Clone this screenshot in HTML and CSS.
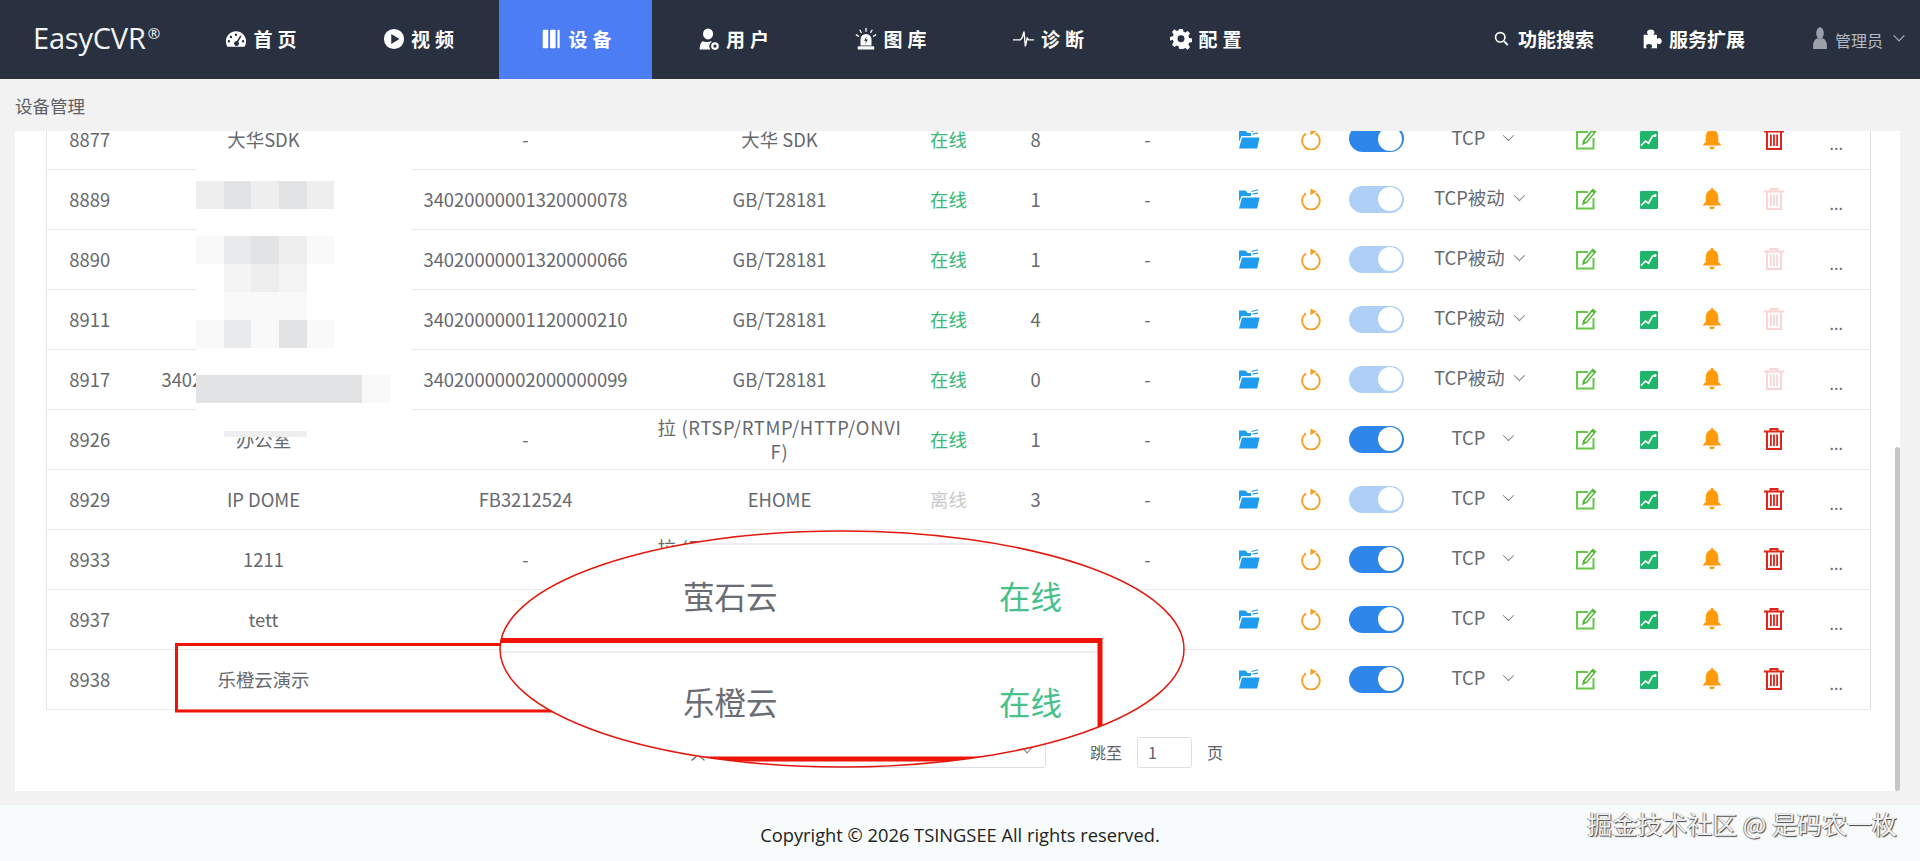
FILE: index.html
```html
<!DOCTYPE html>
<html lang="zh-CN">
<head>
<meta charset="utf-8">
<title>EasyCVR 设备管理</title>
<link rel="stylesheet" href="styles.css">
</head>
<body>
<svg class="defs" aria-hidden="true">
  <symbol id="i-gauge" viewBox="0 0 24 24"><path fill-rule="evenodd" d="M12 3.500C5.900 3.500 1 8.400 1 14.500c0 2.200.6 4.200 1.700 6h18.600c1.100-1.800 1.700-3.800 1.700-6 0-6.100-4.900-11-11-11zM12 6a1.300 1.300 0 1 1 0 2.600A1.300 1.300 0 0 1 12 6zM6.500 8.500a1.300 1.300 0 1 1 0 2.600 1.300 1.300 0 0 1 0-2.600zM4.300 13.200a1.300 1.300 0 1 1 0 2.600 1.300 1.300 0 0 1 0-2.600zM19.700 13.200a1.300 1.300 0 1 1 0 2.600 1.300 1.300 0 0 1 0-2.600zM16.600 8.200l1.400.8-3.500 6a2.700 2.700 0 1 1-1.500-.8z"/></symbol>
  <symbol id="i-play" viewBox="0 0 24 24"><path fill-rule="evenodd" d="M12 1a11 11 0 1 0 0 22 11 11 0 0 0 0-22zM9 6.500l9 5.500-9 5.500z"/></symbol>
  <symbol id="i-device" viewBox="0 0 24 24"><rect x="3" y="2" width="6" height="20" rx="1"/><rect x="11" y="2" width="6" height="20" rx="1"/><rect x="19" y="2" width="2.500" height="20" rx="1"/></symbol>
  <symbol id="i-user" viewBox="0 0 24 24"><ellipse cx="11" cy="6.500" rx="5.500" ry="6"/><path fill-rule="evenodd" d="M5 14.500c-2 1.500-3.200 4.500-3.200 9h12c-1-1-1.500-2.300-1.500-3.700 0-2 1-3.700 2.700-4.600-.3-.3-.5-.5-.9-.7-2 1.200-6.600 1.200-9.100 0z"/><path fill-rule="evenodd" d="M18.500 15.500a4.200 4.200 0 1 0 0 8.400 4.200 4.200 0 0 0 0-8.400zm0 2.400a1.800 1.800 0 1 1 0 3.600 1.800 1.800 0 0 1 0-3.600z"/></symbol>
  <symbol id="i-alarm" viewBox="0 0 24 24"><path fill-rule="evenodd" d="M12 6.500a6 6 0 0 0-6 6V19h12v-6.500a6 6 0 0 0-6-6zM13 9l-3.200 5H12l-1 3.500 3.200-5H12z"/><rect x="3" y="20" width="18" height="3.500" rx="1"/><path d="M11.300 0h1.400v4h-1.400zM4.500 2.300l1.200-.7 2 3.400-1.200.7zM19.500 2.300l-1.200-.7-2 3.400 1.200.7zM.6 7.800l.7-1.200 3.400 2-.7 1.200zM23.400 7.800l-.7-1.200-3.400 2 .7 1.200z"/></symbol>
  <symbol id="i-pulse" viewBox="0 0 24 24"><path fill="none" stroke="currentColor" stroke-width="1.500" d="M0 13h8l2-2.500 2-6.500 1.500 16 2-9 1.500 2h6"/></symbol>
  <symbol id="i-cog" viewBox="0 0 24 24"><path fill-rule="evenodd" d="M10 1h4l.7 3.200 1.900.8 2.800-1.800 2.400 2.900-1.800 2.700.8 2 3.200.7v3.800l-3.200.7-.8 2 1.800 2.700-2.400 2.900-2.800-1.800-1.900.8L14 23h-4l-.7-3.200-1.900-.8-2.800 1.800-2.400-2.900 1.800-2.700-.8-2L0 13.500V9.700l3.200-.7.8-2L2.200 4.300l2.400-2.900L7.400 3.200l1.900-.8zM12 8a3.800 3.800 0 1 0 0 7.600A3.800 3.800 0 0 0 12 8z"/></symbol>
  <symbol id="i-search" viewBox="0 0 24 24"><circle cx="10" cy="10" r="7.500" fill="none" stroke="currentColor" stroke-width="2.600"/><path d="M15 17l2-2 6 6.500-2 2z"/></symbol>
  <symbol id="i-puzzle" viewBox="0 0 24 24"><path d="M2 7h5.500C6.500 6 6 5 6 4c0-2 2-3.500 4.500-3.500S15 2 15 4c0 1-.5 2-1.500 3H18v5c1-.8 1.800-1.200 2.700-1.200 1.800 0 3 1.700 3 3.700s-1.200 3.700-3 3.700c-.9 0-1.700-.4-2.700-1.200V23h-7c.8-1 1.200-1.700 1.200-2.500 0-1.500-1.700-2.500-3.700-2.500s-3.700 1-3.700 2.500c0 .8.4 1.500 1.200 2.500H2z"/></symbol>
  <symbol id="i-avatar" viewBox="0 0 20 32"><ellipse cx="10" cy="9" rx="5.500" ry="8.500" fill="#9aa1ad"/><path fill="#9aa1ad" d="M0 32v-6c0-5 3.500-8.500 6.500-9.500 2 1 5 1 7 0 3 1 6.500 4.500 6.500 9.500v6z"/></symbol>
  <symbol id="i-folder" viewBox="0 0 22 20"><path fill="#1f9bf0" d="M4 8.500h17.500l-2.300 11H1z"/><path fill="#1f9bf0" d="M1 1.500h6.500L9.500 4H13v3H3.500L1 13z"/><path fill="none" stroke="#1f9bf0" stroke-width="1.200" d="M13.500 2.500C16 1.500 18.500 1.500 20 .8M14.500 5c2-.6 4-.6 5.500-.8"/></symbol>
  <symbol id="i-refresh" viewBox="0 0 20 20"><path fill="none" stroke="#f5a125" stroke-width="1.700" d="M5.500 5a8 8 0 1 0 8.700-.1"/><path fill="#f5a125" d="M9.500 .5l5.500 2.700-5.500 3.500z"/></symbol>
  <symbol id="i-edit" viewBox="0 0 22 22"><path fill="none" stroke="#67c84a" stroke-width="2" d="M13 4H2v16.500h16.500V10"/><path fill="#56b83a" d="M17.500 .5l4 3-9.500 11.500-5 2.200 1.100-5z"/><path fill="#fff" d="M17 4l1.400 1.100-7 8.400-1.600.7.400-1.700z"/></symbol>
  <symbol id="i-chart" viewBox="0 0 18 18"><rect width="18" height="18" rx="1.200" fill="#1fb56b"/><path fill="none" stroke="#fff" stroke-width="1.700" d="M1 14.500l4.500-4.500 3 2.200 4-7.200 3 0"/><circle cx="15" cy="4.500" r="1.500" fill="#fff"/></symbol>
  <symbol id="i-bell" viewBox="1 0 18 20"><path fill="#ff9a0a" d="M10 0a1.200 1.200 0 0 1 1.200 1.500C14 2.300 15.700 5 15.700 8v4.500L18.500 16h-17l2.800-3.500V8c0-3 1.700-5.700 4.500-6.500A1.200 1.200 0 0 1 10 0zM7.500 17h5c-.3 1.500-1.300 2.500-2.500 2.500S7.800 18.500 7.500 17z"/></symbol>
  <symbol id="i-trash" viewBox="0 0 20 22"><path fill="none" stroke="currentColor" stroke-width="2" d="M0 3.500h20M3 3.500V21h14V3.500M6.500 3.500V1h7v2.500"/><path fill="currentColor" d="M6 6.500h1.800V18H6zM9.100 6.500h1.800V18H9.100zM12.200 6.500H14V18h-1.800z"/></symbol>
</svg>

<header class="nav">
  <div class="logo">EasyCVR<sup>®</sup></div>
  <nav class="menu">
    <a class="item"><svg class="nic"><use href="#i-gauge"/></svg>首页</a>
    <a class="item"><svg class="nic"><use href="#i-play"/></svg>视频</a>
    <a class="item active"><svg class="nic"><use href="#i-device"/></svg>设备</a>
    <a class="item"><svg class="nic"><use href="#i-user"/></svg>用户</a>
    <a class="item"><svg class="nic"><use href="#i-alarm"/></svg>图库</a>
    <a class="item"><svg class="nic"><use href="#i-pulse"/></svg>诊断</a>
    <a class="item"><svg class="nic"><use href="#i-cog"/></svg>配置</a>
  </nav>
  <div class="tools">
    <a class="tool"><svg class="tic small"><use href="#i-search"/></svg>功能搜索</a>
    <a class="tool"><svg class="tic"><use href="#i-puzzle"/></svg>服务扩展</a>
    <a class="account"><svg class="avatar"><use href="#i-avatar"/></svg>管理员<span class="caret light"></span></a>
  </div>
</header>

<div class="crumb">设备管理</div>

<main class="card">
  <div class="scroller">
    <table class="grid">
      <colgroup>
        <col class="c1"><col class="c2"><col class="c3"><col class="c4"><col class="c5"><col class="c6"><col class="c7"><col class="c8"><col class="c9"><col class="c10"><col class="c11"><col class="c12"><col class="c13"><col class="c14"><col class="c15"><col class="c16">
      </colgroup>
      <tbody>
        <tr><td>8877</td><td>大华SDK</td><td>-</td><td>大华 SDK</td><td class="on">在线</td><td>8</td><td>-</td>
          <td><svg class="ic"><use href="#i-folder"/></svg></td><td><svg class="ic"><use href="#i-refresh"/></svg></td><td><span class="sw"></span></td><td><span class="mode tcp">TCP<span class="caret"></span></span></td><td><svg class="ic"><use href="#i-edit"/></svg></td><td><svg class="ic chart"><use href="#i-chart"/></svg></td><td><svg class="ic"><use href="#i-bell"/></svg></td><td><svg class="ic trash"><use href="#i-trash"/></svg></td><td class="more">...</td></tr>
        <tr><td>8889</td><td></td><td>34020000001320000078</td><td>GB/T28181</td><td class="on">在线</td><td>1</td><td>-</td>
          <td><svg class="ic"><use href="#i-folder"/></svg></td><td><svg class="ic"><use href="#i-refresh"/></svg></td><td><span class="sw off"></span></td><td><span class="mode">TCP被动<span class="caret"></span></span></td><td><svg class="ic"><use href="#i-edit"/></svg></td><td><svg class="ic chart"><use href="#i-chart"/></svg></td><td><svg class="ic"><use href="#i-bell"/></svg></td><td><svg class="ic trash off"><use href="#i-trash"/></svg></td><td class="more">...</td></tr>
        <tr><td>8890</td><td></td><td>34020000001320000066</td><td>GB/T28181</td><td class="on">在线</td><td>1</td><td>-</td>
          <td><svg class="ic"><use href="#i-folder"/></svg></td><td><svg class="ic"><use href="#i-refresh"/></svg></td><td><span class="sw off"></span></td><td><span class="mode">TCP被动<span class="caret"></span></span></td><td><svg class="ic"><use href="#i-edit"/></svg></td><td><svg class="ic chart"><use href="#i-chart"/></svg></td><td><svg class="ic"><use href="#i-bell"/></svg></td><td><svg class="ic trash off"><use href="#i-trash"/></svg></td><td class="more">...</td></tr>
        <tr><td>8911</td><td></td><td>34020000001120000210</td><td>GB/T28181</td><td class="on">在线</td><td>4</td><td>-</td>
          <td><svg class="ic"><use href="#i-folder"/></svg></td><td><svg class="ic"><use href="#i-refresh"/></svg></td><td><span class="sw off"></span></td><td><span class="mode">TCP被动<span class="caret"></span></span></td><td><svg class="ic"><use href="#i-edit"/></svg></td><td><svg class="ic chart"><use href="#i-chart"/></svg></td><td><svg class="ic"><use href="#i-bell"/></svg></td><td><svg class="ic trash off"><use href="#i-trash"/></svg></td><td class="more">...</td></tr>
        <tr><td>8917</td><td>34020000002000000099</td><td>34020000002000000099</td><td>GB/T28181</td><td class="on">在线</td><td>0</td><td>-</td>
          <td><svg class="ic"><use href="#i-folder"/></svg></td><td><svg class="ic"><use href="#i-refresh"/></svg></td><td><span class="sw off"></span></td><td><span class="mode">TCP被动<span class="caret"></span></span></td><td><svg class="ic"><use href="#i-edit"/></svg></td><td><svg class="ic chart"><use href="#i-chart"/></svg></td><td><svg class="ic"><use href="#i-bell"/></svg></td><td><svg class="ic trash off"><use href="#i-trash"/></svg></td><td class="more">...</td></tr>
        <tr><td>8926</td><td>办公室</td><td>-</td><td class="wrap">拉 (RTSP/RTMP/HTTP/ONVIF)</td><td class="on">在线</td><td>1</td><td>-</td>
          <td><svg class="ic"><use href="#i-folder"/></svg></td><td><svg class="ic"><use href="#i-refresh"/></svg></td><td><span class="sw"></span></td><td><span class="mode tcp">TCP<span class="caret"></span></span></td><td><svg class="ic"><use href="#i-edit"/></svg></td><td><svg class="ic chart"><use href="#i-chart"/></svg></td><td><svg class="ic"><use href="#i-bell"/></svg></td><td><svg class="ic trash"><use href="#i-trash"/></svg></td><td class="more">...</td></tr>
        <tr><td>8929</td><td>IP DOME</td><td>FB3212524</td><td>EHOME</td><td class="offline">离线</td><td>3</td><td>-</td>
          <td><svg class="ic"><use href="#i-folder"/></svg></td><td><svg class="ic"><use href="#i-refresh"/></svg></td><td><span class="sw off"></span></td><td><span class="mode tcp">TCP<span class="caret"></span></span></td><td><svg class="ic"><use href="#i-edit"/></svg></td><td><svg class="ic chart"><use href="#i-chart"/></svg></td><td><svg class="ic"><use href="#i-bell"/></svg></td><td><svg class="ic trash"><use href="#i-trash"/></svg></td><td class="more">...</td></tr>
        <tr><td>8933</td><td>1211</td><td>-</td><td class="wrap">拉 (RTSP/RTMP/HTTP/ONVIF)</td><td class="on">在线</td><td>1</td><td>-</td>
          <td><svg class="ic"><use href="#i-folder"/></svg></td><td><svg class="ic"><use href="#i-refresh"/></svg></td><td><span class="sw"></span></td><td><span class="mode tcp">TCP<span class="caret"></span></span></td><td><svg class="ic"><use href="#i-edit"/></svg></td><td><svg class="ic chart"><use href="#i-chart"/></svg></td><td><svg class="ic"><use href="#i-bell"/></svg></td><td><svg class="ic trash"><use href="#i-trash"/></svg></td><td class="more">...</td></tr>
        <tr><td>8937</td><td>tett</td><td>-</td><td>萤石云</td><td class="on">在线</td><td>1</td><td>-</td>
          <td><svg class="ic"><use href="#i-folder"/></svg></td><td><svg class="ic"><use href="#i-refresh"/></svg></td><td><span class="sw"></span></td><td><span class="mode tcp">TCP<span class="caret"></span></span></td><td><svg class="ic"><use href="#i-edit"/></svg></td><td><svg class="ic chart"><use href="#i-chart"/></svg></td><td><svg class="ic"><use href="#i-bell"/></svg></td><td><svg class="ic trash"><use href="#i-trash"/></svg></td><td class="more">...</td></tr>
        <tr><td>8938</td><td>乐橙云演示</td><td>-</td><td>乐橙云</td><td class="on">在线</td><td>1</td><td>-</td>
          <td><svg class="ic"><use href="#i-folder"/></svg></td><td><svg class="ic"><use href="#i-refresh"/></svg></td><td><span class="sw"></span></td><td><span class="mode tcp">TCP<span class="caret"></span></span></td><td><svg class="ic"><use href="#i-edit"/></svg></td><td><svg class="ic chart"><use href="#i-chart"/></svg></td><td><svg class="ic"><use href="#i-bell"/></svg></td><td><svg class="ic trash"><use href="#i-trash"/></svg></td><td class="more">...</td></tr>
      </tbody>
    </table>
    <div class="pager">
      <span class="count">共 10 条</span>
      <div class="size">10 条/页<span class="caret"></span></div>
      <span class="jump">跳至</span>
      <div class="page-input">1</div>
      <span>页</span>
    </div>
  </div>
  <div class="thumb"></div>
</main>

<footer class="foot">
  <span>Copyright © 2026 TSINGSEE All rights reserved.</span>
  <span class="mark">掘金技术社区 @ 是码农一枚</span>
</footer>

<div class="mosaic">
  <b class="blank"></b>
  <i class="s3"></i><i class="s5"></i><i class="s3"></i><i class="s5"></i><i class="s3"></i><b class="rest"></b>
  <b class="blank"></b>
  <i class="s1"></i><i class="s4"></i><i class="s5"></i><i class="s3"></i><i class="s1"></i><b class="rest"></b>
  <i class="s0"></i><i class="s2"></i><i class="s3"></i><i class="s2"></i><i class="s0"></i><b class="rest"></b>
  <i class="s0"></i><i class="s1"></i><i class="s1"></i><i class="s1"></i><i class="s0"></i><b class="rest"></b>
  <i class="s1"></i><i class="s4"></i><i class="s1"></i><i class="s5"></i><i class="s1"></i><b class="rest"></b>
  <b class="blank"></b>
  <i class="s5"></i><i class="s5"></i><i class="s5"></i><i class="s5"></i><i class="s5"></i><i class="s5"></i><i class="s1"></i><i class="s0"></i>
  <b class="blank"></b>
  <i class="s0"></i><i class="s3"></i><i class="s3"></i><i class="s3"></i><b class="rest"></b>
</div>

<svg class="callout" viewBox="0 0 1920 861" aria-hidden="true">
  <defs><clipPath id="inside"><ellipse cx="842" cy="649" rx="342" ry="118"/></clipPath></defs>
  <path fill="none" stroke="#f01408" stroke-width="3" d="M520 644.500H176.500V711H560"/>
  <ellipse cx="842" cy="649" rx="342" ry="118" fill="#fff"/>
  <g clip-path="url(#inside)">
    <path stroke="#eeeef0" stroke-width="2" d="M690 544H990M500 652H1097"/>
    <path fill="none" stroke="#f01408" stroke-width="5" d="M490 640.500H1100V760"/>
    <path stroke="#f01408" stroke-width="5" d="M690 759H1100"/>
  </g>
  <ellipse cx="842" cy="649" rx="342" ry="118" fill="none" stroke="#e3170d" stroke-width="1.500"/>
</svg>
<div class="lens lens-a"><span>萤石云</span><span class="green">在线</span></div>
<div class="lens lens-b"><span>乐橙云</span><span class="green">在线</span></div>
</body>
</html>
```
FILE: styles.css
```css
* { box-sizing: border-box; }
html, body { margin: 0; height: 100%; }
body {
  height: 861px;
  overflow: hidden;
  display: flex;
  flex-direction: column;
  position: relative;
  background: #f2f2f2;
  color: #606266;
  font-family: "Noto Sans CJK SC", "Noto Sans", sans-serif;
  font-size: 18px;
}
.defs { position: absolute; width: 0; height: 0; }

.nav {
  height: 79px;
  flex: none;
  display: flex;
  align-items: stretch;
  background: #293140;
  color: #fff;
}
.logo {
  width: 184px;
  padding-left: 33px;
  font-family: "Open Sans", sans-serif;
  font-size: 29px;
  line-height: 76px;
  letter-spacing: -.2px;
  color: #f4f5f7;
  white-space: nowrap;
}
.logo sup { font-size: 15px; line-height: 0; vertical-align: 10px; margin-left: 2px; }
.menu { display: flex; gap: 4.500px; }
.item {
  width: 153px;
  display: flex;
  align-items: center;
  justify-content: center;
  gap: 6px;
  font-size: 19px;
  font-weight: 700;
  letter-spacing: 5px;
  padding: 0 0 2px 6px;
}
.item.active { background: #4d7df5; }
.nic { width: 22px; height: 22px; fill: #fff; color: #fff; flex: none; }
.tools { margin-left: auto; display: flex; align-items: center; padding-right: 17px; }
.tool {
  display: flex;
  align-items: center;
  font-size: 19px;
  font-weight: 700;
  gap: 7px;
  margin-right: 48px;
  padding-bottom: 2px;
}
.tool:nth-child(2) { margin-right: 65px; }
.tic { width: 20px; height: 20px; fill: #fff; color: #fff; }
.tic.small { width: 15px; height: 15px; margin-right: 2px; }
.account { display: flex; align-items: center; font-size: 16px; color: #b4b9c2; }
.avatar { width: 20px; height: 22px; margin-right: 5px; margin-top: -3px; }
.caret {
  display: inline-block;
  width: 8px;
  height: 8px;
  border-right: 1.500px solid #7e8288;
  border-bottom: 1.500px solid #7e8288;
  transform: rotate(45deg) translate(-3px, -3px);
}
.caret.light { border-color: #b4b9c2; margin-left: 12px; }

.crumb {
  height: 52px;
  flex: none;
  padding-left: 15px;
  line-height: 54px;
  font-size: 17.500px;
  color: #5d6066;
}

.card {
  height: 660px;
  flex: none;
  margin: 0 15px;
  position: relative;
  background: #fff;
  width: 1885px;
}
.scroller { height: 100%; overflow: hidden; }
.grid {
  width: 1824px;
  margin: -22px 0 0 31px;
  table-layout: fixed;
  border-collapse: collapse;
  border-left: 1px solid #e6e6e6;
  border-right: 1px solid #dcdcdc;
  border-bottom: 1px solid #dcdcdc;
  font-size: 18.400px;
  color: #66696f;
}
.c1 { width: 86px; } .c2 { width: 262px; } .c3 { width: 262px; } .c4 { width: 246px; }
.c5 { width: 92px; } .c6 { width: 82px; } .c7 { width: 142px; } .c8 { width: 60px; }
.c9 { width: 64px; } .c10 { width: 68px; } .c11 { width: 142px; } .c12 { width: 66px; }
.c13 { width: 60px; } .c14 { width: 66px; } .c15 { width: 58px; } .c16 { width: 68px; }
.grid tr { height: 60px; border-bottom: 1px solid #ebebeb; }
.grid td {
  padding: 0;
  text-align: center;
  vertical-align: middle;
  line-height: 30px;
  white-space: nowrap;
}
.grid td.wrap { white-space: normal; word-break: break-all; letter-spacing: .7px; line-height: 24px; }
.grid .on { color: #35b77a; }
.grid .offline { color: #c8cacd; }
.grid td.more { font-size: 16px; padding-top: 8px; }
.ic { width: 22px; height: 22px; display: block; margin: 0 auto; }
.ic.chart { width: 18px; height: 18px; margin-top: 2px; }
.trash { color: #e0241a; width: 20px; height: 22px; }
.trash.off { color: #f9d6d3; }
.sw {
  display: block;
  width: 55px;
  height: 27px;
  margin: 0 auto;
  border-radius: 14px;
  background: #2f86ea;
  position: relative;
}
.sw::after {
  content: "";
  position: absolute;
  right: 2px;
  top: 1.500px;
  width: 24px;
  height: 24px;
  border-radius: 50%;
  background: #fff;
}
.sw.off { background: #aed0f7; }
.mode { display: inline-flex; align-items: center; position: relative; top: -2px; left: -3.500px; gap: 9.500px; }
.mode.tcp { gap: 18px; left: 0; }
.mode .caret { transform: rotate(45deg) translateY(-2px); }

.pager {
  display: flex;
  align-items: center;
  height: 31px;
  margin-top: 27px;
  margin-left: 675px;
  font-size: 16px;
}
.count { width: 120px; }
.size {
  width: 236px;
  height: 31px;
  border: 1px solid #dcdfe6;
  border-radius: 3px;
  line-height: 29px;
  padding: 0 14px;
  display: flex;
  justify-content: space-between;
  align-items: center;
}
.jump { margin-left: 44px; }
.page-input {
  width: 55px;
  height: 31px;
  margin: 0 15px;
  padding-left: 10px;
  line-height: 29px;
  border: 1px solid #dcdfe6;
  border-radius: 3px;
}
.thumb {
  position: absolute;
  right: 0;
  top: 316px;
  bottom: 0;
  width: 5px;
  border-radius: 3px;
  background: #c6c6c6;
}

.foot {
  height: 56px;
  margin-top: 14px;
  flex: none;
  background: #f7fbfc;
  position: relative;
  text-align: center;
  padding-top: 18px;
  font-family: "Open Sans", sans-serif;
  font-size: 18.300px;
  line-height: 24px;
  color: #222;
}
.mark {
  position: absolute;
  right: 23px;
  top: 0;
  font-family: "Noto Sans CJK SC", sans-serif;
  font-size: 25px;
  line-height: 36px;
  color: #f0f1f2;
  text-shadow: 1px 1px 1px #444, -1px 0 0 #9a9a9a;
}

.mosaic {
  position: absolute;
  left: 196px;
  top: 153px;
  width: 216px;
  height: 284px;
  overflow: hidden;
  background: #fff;
  display: grid;
  grid-template-columns: repeat(8, 27.700px);
  grid-auto-rows: 27.800px;
  align-content: start;
}
.mosaic .blank { grid-column: 1 / -1; }
.mosaic .rest { grid-column: auto / -1; }
.s0 { background: #fff; }
.s1 { background: #f9f9fa; }
.s2 { background: #f4f4f5; }
.s3 { background: #eeeeef; }
.s4 { background: #e9eaec; }
.s5 { background: #e2e3e5; }

.callout { position: absolute; left: 0; top: 0; width: 1920px; height: 861px; pointer-events: none; }
.lens {
  position: absolute;
  left: 683px;
  width: 379px;
  display: flex;
  justify-content: space-between;
  font-size: 31.500px;
  line-height: 44px;
  color: #6a6d73;
}
.lens-a { top: 573px; }
.lens-b { top: 679px; }
.lens .green { color: #48c08a; }
```
